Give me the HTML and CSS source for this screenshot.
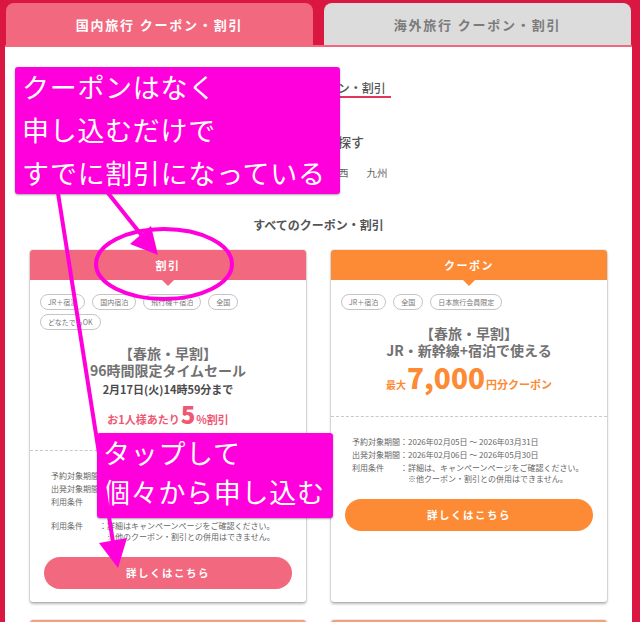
FILE: index.html
```html
<!DOCTYPE html>
<html lang="ja">
<head>
<meta charset="utf-8">
<title>国内旅行 クーポン・割引</title>
<link rel="stylesheet" href="styles.css">
</head>
<body>
<div class="frame">
  <nav class="tabs">
    <div class="tab tab-active">国内旅行 クーポン・割引</div>
    <div class="tab">海外旅行 クーポン・割引</div>
  </nav>
  <main class="content">
    <h1 class="heading"><span>国内旅行 クーポン・割引</span></h1>
    <h2 class="area-title">エリアから探す</h2>
    <ul class="areas"><li>関東</li><li>中部</li><li>関西</li><li>九州</li></ul>
    <h2 class="all-title">すべてのクーポン・割引</h2>
    <div class="cards">
      <article class="card card-pink">
        <div class="card-head">割引</div>
        <div class="card-body">
          <ul class="tags"><li>JR＋宿泊</li><li>国内宿泊</li><li>飛行機＋宿泊</li><li>全国</li><li>どなたでもOK</li></ul>
          <p class="card-title">【春旅・早割】<br>96時間限定タイムセール</p>
          <p class="deadline">2月17日(火)14時59分まで</p>
          <p class="offer">お1人様あたり<b>5</b>%割引</p>
        </div>
        <div class="details">
          <div class="row"><span>予約対象期間</span><span class="colon">：</span><span>2026年02月10日 〜 2026年02月17日</span></div>
          <div class="row"><span>出発対象期間</span><span class="colon">：</span><span>2026年02月10日 〜 2026年05月31日</span></div>
          <div class="row"><span>利用条件</span><span class="colon">：</span><span>お1人様あたりの旅行代金より5%割引<br>一部対象外のプランがございます。</span></div>
          <div class="row"><span>利用条件</span><span class="colon">：</span><span>詳細はキャンペーンページをご確認ください。<br>※他のクーポン・割引との併用はできません。</span></div>
        </div>
        <a class="btn" href="#">詳しくはこちら</a>
      </article>
      <article class="card card-orange">
        <div class="card-head">クーポン</div>
        <div class="card-body">
          <ul class="tags"><li>JR＋宿泊</li><li>全国</li><li>日本旅行会員限定</li></ul>
          <p class="card-title">【春旅・早割】<br>JR・新幹線+宿泊で使える</p>
          <p class="offer"><small>最大</small><b>7,000</b>円分クーポン</p>
        </div>
        <div class="details">
          <div class="row"><span>予約対象期間</span><span class="colon">：</span><span>2026年02月05日 〜 2026年03月31日</span></div>
          <div class="row"><span>出発対象期間</span><span class="colon">：</span><span>2026年02月06日 〜 2026年05月30日</span></div>
          <div class="row"><span>利用条件</span><span class="colon">：</span><span>詳細は、キャンペーンページをご確認ください。<br>※他クーポン・割引との併用はできません。</span></div>
        </div>
        <a class="btn" href="#">詳しくはこちら</a>
      </article>
      <article class="card card-peach">
        <div class="card-head"></div>
        <div class="card-body"></div>
      </article>
      <article class="card card-peach">
        <div class="card-head"></div>
        <div class="card-body"></div>
      </article>
    </div>
  </main>

  <div class="callout callout-1"><p>クーポンはなく<br>申し込むだけで<br>すでに割引になっている</p></div>
  <div class="callout callout-2"><p>タップして<br>個々から申し込む</p></div>
  <svg class="marks" width="640" height="622" viewBox="0 0 640 622">
    <ellipse cx="164" cy="264" rx="68" ry="35" fill="none" stroke="#ff00dc" stroke-width="4"/>
    <line x1="108" y1="193" x2="143" y2="237" stroke="#ff00dc" stroke-width="4"/>
    <polygon points="158,255 130,244 151,226" fill="#ff00dc"/>
    <line x1="58" y1="193" x2="113" y2="542" stroke="#ff00dc" stroke-width="4"/>
    <polygon points="118,568 99,543 127,538" fill="#ff00dc"/>
  </svg>
</div>
</body>
</html>
```

FILE: styles.css
```css
* { box-sizing: border-box; margin: 0; padding: 0; }
html, body { width: 640px; height: 622px; overflow: hidden; }
body {
  background: #da1741;
  font-family: "Noto Sans CJK JP", "Noto Sans", sans-serif;
  color: #666;
}
.frame {
  position: relative;
  width: 640px;
  height: 622px;
  padding: 3px 8px 0 5px;
  display: flex;
  flex-direction: column;
}
.tabs {
  display: flex;
  gap: 11px;
  padding: 0 1px;
  border-bottom: 2px solid #f2687e;
}
.tab {
  flex: 1;
  height: 42px;
  border-radius: 8px 8px 0 0;
  background: #dcdcdc;
  color: #7b7b7b;
  font-weight: 700;
  font-size: 13px;
  letter-spacing: 1.8px;
  display: flex;
  align-items: center;
  justify-content: center;
}
.tab-active { background: #f2687e; color: #fff; }

.content {
  flex: 1;
  background: #fff;
  padding: 33px 25px 0;
  display: flex;
  flex-direction: column;
}
.heading {
  text-align: center;
  font-size: 12px;
  font-weight: 500;
  line-height: 16px;
  color: #555;
}
.heading span {
  display: inline-block;
  padding: 0 5px;
  border-bottom: 2px solid #e0365c;
}
.area-title {
  margin-top: 35px;
  font-size: 13px;
  line-height: 18px;
  font-weight: 500;
  text-align: center;
  color: #555;
}
.areas {
  list-style: none;
  display: flex;
  justify-content: center;
  gap: 18px;
  margin-top: 15px;
  font-size: 10.5px;
  line-height: 14px;
  color: #666;
}
.all-title {
  margin-top: 37px;
  font-size: 12px;
  font-weight: 700;
  line-height: 16px;
  text-align: center;
  color: #555;
}
.cards {
  margin-top: 17px;
  display: grid;
  grid-template-columns: 1fr 1fr;
  column-gap: 25px;
  row-gap: 18px;
}
.card {
  background: #fff;
  border-radius: 3px;
  box-shadow: 0 0 0 1px rgba(0,0,0,.07), 0 2px 3px rgba(0,0,0,.28);
  display: flex;
  flex-direction: column;
  padding-bottom: 13px;
  min-height: 200px;
}
.card-head {
  position: relative;
  height: 30px;
  line-height: 30px;
  text-align: center;
  color: #fff;
  font-weight: 700;
  font-size: 11px;
  letter-spacing: 1.5px;
  border-radius: 3px 3px 0 0;
}
.card-head::after {
  content: "";
  position: absolute;
  left: 50%;
  bottom: -6px;
  margin-left: -6px;
  border-left: 6px solid transparent;
  border-right: 6px solid transparent;
  border-top: 6px solid transparent;
}
.card-pink .card-head { background: #f2687e; }
.card-pink .card-head::after { border-top-color: #f2687e; }
.card-orange .card-head { background: #fd8a34; }
.card-orange .card-head::after { border-top-color: #fd8a34; }
.card-peach .card-head { background: #f0a27c; }

.card-body {
  padding: 14px 10px 18px;
  border-bottom: 1px dashed #c9c9c9;
  text-align: center;
}
.tags {
  list-style: none;
  display: flex;
  flex-wrap: wrap;
  gap: 4px 7px;
}
.tags li {
  height: 16px;
  line-height: 14px;
  padding: 0 7px;
  border: 1px solid #c5c5c5;
  border-radius: 8px;
  font-size: 7px;
  color: #777;
}
.card-title {
  margin-top: 15px;
  font-size: 14px;
  line-height: 17px;
  font-weight: 700;
  color: #727272;
}
.deadline {
  margin-top: 3px;
  font-size: 11px;
  line-height: 14px;
  font-weight: 700;
  color: #4a4a4a;
}
.offer {
  margin-top: 8px;
  line-height: 26px;
  font-weight: 700;
  font-size: 11px;
}
.offer b { font-size: 24px; line-height: 20px; padding: 0 1px; }
.offer small { font-size: 10px; }
.card-pink .offer { color: #ef5773; }
.card-orange .offer { color: #fd8a34; }
.card-orange .offer b { font-size: 28px; }

.details {
  padding: 19px 8px 0 21px;
  font-size: 8px;
  line-height: 11px;
  color: #666;
  display: flex;
  flex-direction: column;
  gap: 2px;
}
.row {
  display: grid;
  grid-template-columns: 48px 8px 1fr;
  white-space: nowrap;
}
.colon { text-align: center; }

.btn {
  display: block;
  margin: 15px 14px 0;
  height: 32px;
  border-radius: 16px;
  line-height: 32px;
  text-align: center;
  color: #fff;
  font-size: 10.5px;
  font-weight: 700;
  letter-spacing: 1.5px;
  text-decoration: none;
}
.card-pink .btn { background: #f2687e; }
.card-orange .btn { background: #fd8a34; }

.callout {
  position: absolute;
  background: #ff00dc;
  color: #fff;
  font-size: 27px;
  letter-spacing: .7px;
  border-radius: 3px;
  box-shadow: 0 1px 2px rgba(0,0,0,.35);
  font-weight: 400;
  white-space: nowrap;
}
.callout-1 {
  left: 15px;
  top: 67px;
  width: 325px;
  height: 127px;
  padding: 0 7px;
  line-height: 43px;
}
.callout-1 p { margin-top: -2px; }
.callout-2 {
  left: 97px;
  top: 433px;
  width: 236px;
  height: 85px;
  padding: 0 6px;
  line-height: 39px;
}
.marks {
  position: absolute;
  left: 0;
  top: 0;
  pointer-events: none;
}
```
